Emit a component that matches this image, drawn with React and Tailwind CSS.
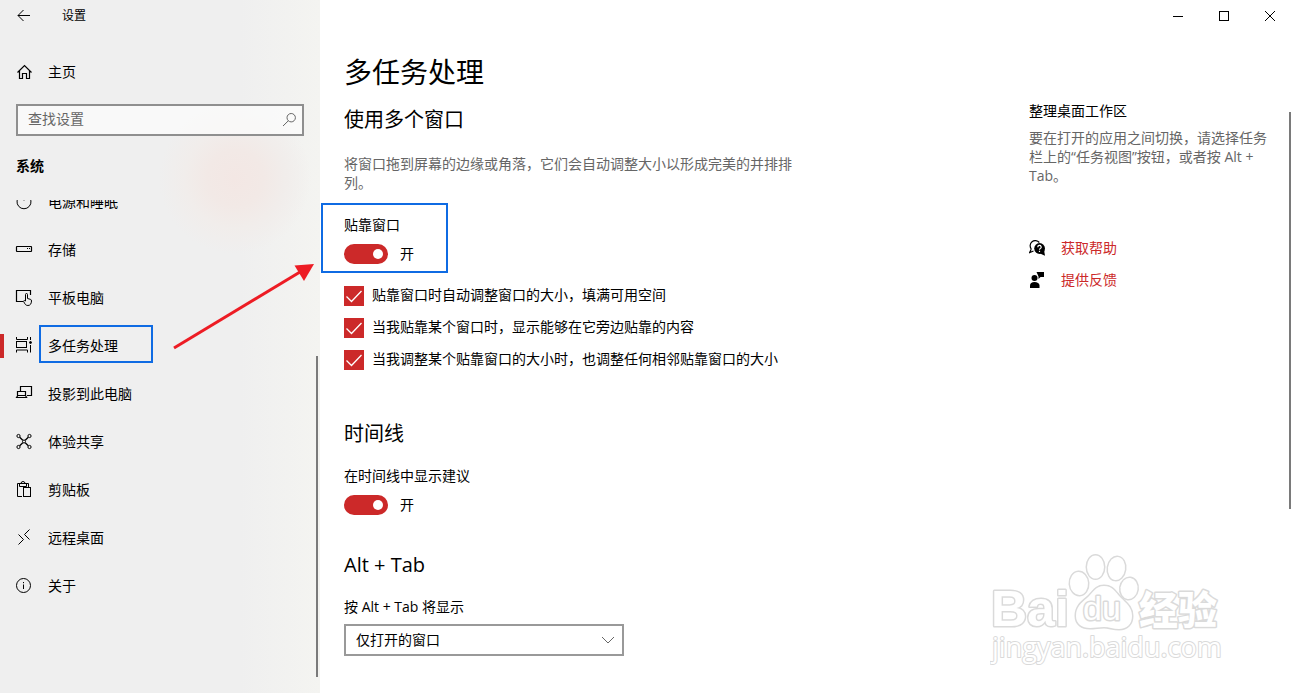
import { useState } from 'react';

const Icon = ({ children, className = '' }) => (
    <svg viewBox="0 0 16 16" className={`w-4 h-4 shrink-0 ${className}`} fill="none" stroke="currentColor" aria-hidden="true">
        {children}
    </svg>
);

const icons = {
    power: (
        <>
            <path d="M4 2A7 7 0 1 0 12 2" />
            <path d="M8 0V6.500" />
        </>
    ),
    storage: (
        <>
            <rect x="0.500" y="4.500" width="15" height="5" rx="0.500" strokeWidth="1.200" />
            <path d="M11 6.500h1M13 6.500h1" />
        </>
    ),
    tablet: (
        <>
            <path d="M7 11.500H0.500V0.500h14V5" strokeWidth="1.200" />
            <path d="M9.500 11V4.500a1 1 0 0 1 2 0V8.500l2.800 0.800a1.600 1.600 0 0 1 1.200 1.700c-0.100 2.700-1.200 4.500-3.600 4.500-2 0-2.900-1-4.400-4.300 0.300-0.900 1.300-0.900 2-0.200z" />
        </>
    ),
    multitask: (
        <>
            <path d="M0.500 -1v2.500h11v-2.500M0.500 14.500v-2.500h11v2.500M14.500 -1v3M14.500 7v7.500" />
            <rect x="0.500" y="3.500" width="10" height="6" />
            <circle cx="14.500" cy="4.500" r="1" fill="currentColor" />
        </>
    ),
    project: (
        <>
            <path d="M4.500 5V0.500h11v9h-4.500" strokeWidth="1.200" />
            <path d="M1.500 10V5.500h8V10M1.800 9.500L0.600 11.500h10L9.500 9.500z" strokeWidth="1.200" />
        </>
    ),
    share: (
        <>
            <circle cx="2.500" cy="2" r="1.600" />
            <circle cx="13.500" cy="2" r="1.600" />
            <circle cx="2.500" cy="13" r="1.600" />
            <circle cx="13.500" cy="13" r="1.600" />
            <circle cx="8" cy="7.500" r="1.500" />
            <path d="M3.700 3.200L6.800 6.300M12.300 3.200L9.200 6.300M3.700 11.800L6.800 8.700M12.300 11.800L9.200 8.700" strokeWidth="1.300" />
        </>
    ),
    clipboard: (
        <>
            <path d="M6 14.500H1.500v-13h11V6M3.500 1.500v3h7v-3" />
            <path d="M5 1.500a2 2 0 0 1 4 0" />
            <rect x="7.500" y="5.500" width="7" height="9" />
        </>
    ),
    remote: <path d="M2.500 4.500L7.500 9.500L2.500 14.500M13.500 -0.500L8.500 4.500L13.500 9.500" />,
    about: (
        <>
            <circle cx="7.500" cy="7.500" r="7" />
            <path d="M7.500 6.500v4.500M7.500 4v1.200" />
        </>
    ),
};

const navItems = [
    { id: 'power', label: '电源和睡眠' },
    { id: 'storage', label: '存储' },
    { id: 'tablet', label: '平板电脑' },
    { id: 'multitask', label: '多任务处理' },
    { id: 'project', label: '投影到此电脑' },
    { id: 'share', label: '体验共享' },
    { id: 'clipboard', label: '剪贴板' },
    { id: 'remote', label: '远程桌面' },
    { id: 'about', label: '关于' },
];

const snapOptions = [
    '贴靠窗口时自动调整窗口的大小，填满可用空间',
    '当我贴靠某个窗口时，显示能够在它旁边贴靠的内容',
    '当我调整某个贴靠窗口的大小时，也调整任何相邻贴靠窗口的大小',
];

const Toggle = ({ id, label }) => {
    const [on, setOn] = useState(true);

    return (
        <div>
            <label htmlFor={id} className="block">{label}</label>
            <div className="mt-[9px] flex items-center gap-3">
                <input id={id} type="checkbox" role="switch" checked={on} onChange={() => setOn(!on)}
                    className="appearance-none w-11 h-5 shrink-0 rounded-full border-2 border-[#666] px-[3px] flex items-center checked:justify-end checked:bg-[#cc2929] checked:border-[#cc2929] before:block before:w-[10px] before:h-[10px] before:rounded-full before:bg-[#666] checked:before:bg-white" />
                <span>{on ? '开' : '关'}</span>
            </div>
        </div>
    );
};

const Sidebar = () => (
    <aside className="relative w-80 shrink-0 flex flex-col bg-[radial-gradient(circle_at_235px_178px,#f3e7e4_0px,#f2e9e6_28px,#f1edeb_50px,transparent_76px),linear-gradient(to_right,#efefef_75%,#f4f4f1_100%)]">
        <div className="h-8 flex items-center">
            <button aria-label="返回" className="w-12 h-8 flex items-center justify-center">
                <Icon><path d="M14 7.500H2M7.500 2L2 7.500L7.500 13" /></Icon>
            </button>
            <span className="ml-[14px] text-xs">设置</span>
        </div>

        <a href="#home" className="mt-4 h-12 px-4 flex items-center gap-4">
            <Icon>
                <path d="M1.500 8.500L8.500 1.500L15.500 8.500M3.500 7v7.500h3v-5h4v5h3V7" strokeWidth="1.200" />
            </Icon>
            <span>主页</span>
        </a>

        <div className="relative mt-2 mx-4">
            <input type="text" aria-label="查找设置" placeholder="查找设置"
                className="block w-full h-8 border-2 border-[#8f8f8f] bg-white/60 pl-[10px] pr-8 pb-1 placeholder:text-[#666]" />
            <Icon className="absolute right-[6px] top-2 text-[#666]">
                <circle cx="9.200" cy="5.700" r="4.200" />
                <path d="M6.300 8.800L1 14" />
            </Icon>
        </div>

        <h2 className="mt-5 px-4 font-bold">系统</h2>

        <nav className="mt-6 overflow-hidden">
            <ul className="-mt-[22px]">
                {navItems.map((item) => (
                    <li key={item.id}>
                        <a href={`#${item.id}`} className="relative h-12 px-4 flex items-center gap-4">
                            {item.id === 'multitask' && <span className="absolute left-0 w-1 h-6 bg-[#cc2929]" />}
                            <Icon className="overflow-visible">{icons[item.id]}</Icon>
                            <span>{item.label}</span>
                            {item.id === 'multitask' && <span className="absolute left-[39px] top-[3px] w-[114px] h-[38px] border-2 border-[#0f6be3]" />}
                        </a>
                    </li>
                ))}
            </ul>
        </nav>

        <div className="absolute right-[2px] top-[356px] bottom-4 w-[2px] bg-[#7a7a7a]" />

        {/* Arrow from the menu item to the switch */}
        <svg viewBox="0 0 144 90" className="absolute left-[172px] top-[261px] w-[144px] h-[90px]" aria-hidden="true">
            <path d="M2 87L128 11" stroke="#ed1c24" strokeWidth="3" />
            <path d="M142 3L122.500 4.500L132 20z" fill="#ed1c24" />
        </svg>
    </aside>
);

const WindowControls = () => (
    <div className="h-8 flex justify-end">
        <button aria-label="最小化" className="w-[46px] flex items-center justify-center">
            <Icon><path d="M3 8.500h10" /></Icon>
        </button>
        <button aria-label="最大化" className="w-[46px] flex items-center justify-center">
            <Icon><rect x="3.500" y="3.500" width="9" height="9" /></Icon>
        </button>
        <button aria-label="关闭" className="w-[46px] flex items-center justify-center">
            <Icon><path d="M3 3L13 13M13 3L3 13" /></Icon>
        </button>
    </div>
);

const Help = () => (
    <section className="w-[264px] shrink-0 pt-[69px] pr-6">
        <h2>整理桌面工作区</h2>
        <p className="mt-[7px] leading-[19px] text-[#666]">
            要在打开的应用之间切换，请选择任务栏上的“任务视图”按钮，或者按 Alt + Tab。
        </p>
        <div className="mt-[53px] flex flex-col gap-3 leading-5 text-[#cc2929]">
            <a href="#help" className="flex items-center gap-4">
                <Icon className="text-black">
                    <path d="M2.300 9A5 5 0 1 1 10.300 2.500M2.300 9L0.700 12.500L4.500 11" strokeWidth="1.200" />
                    <circle cx="10.600" cy="8.500" r="5.400" fill="currentColor" stroke="none" />
                    <path d="M11 13.500L16 15.800L15 10z" fill="currentColor" stroke="none" />
                    <path d="M8.800 7.200a1.700 1.700 0 1 1 2.600 1.300c-0.700 0.400-0.900 0.600-0.900 1.300M10.500 10.700v1.200" stroke="white" strokeWidth="1.200" />
                </Icon>
                <span>获取帮助</span>
            </a>
            <a href="#feedback" className="flex items-center gap-4">
                <Icon className="text-black">
                    <g fill="currentColor" stroke="none">
                        <circle cx="5.500" cy="6" r="3" />
                        <path d="M1 16v-2.500c0-2.300 1.700-3.500 4.500-3.500s5 1.200 5 3.500V16z" />
                        <path d="M7.500 0H15v5h-3.500L9.500 7V4.500z" />
                    </g>
                </Icon>
                <span>提供反馈</span>
            </a>
        </div>
    </section>
);

const Watermark = () => (
    <svg viewBox="0 0 240 120" className="absolute right-[63px] bottom-[22px] w-[240px] h-[120px] pointer-events-none"
        fill="white" stroke="#dadada" strokeWidth="3" strokeLinejoin="round" style={{ paintOrder: 'stroke' }} aria-hidden="true">
        <text x="1" y="75" fontSize="50" fontWeight="700" fontFamily="Liberation Sans, sans-serif">Bai</text>
        <ellipse cx="89" cy="32.500" rx="9" ry="11.500" transform="rotate(-4 89 32.500)" />
        <ellipse cx="105.500" cy="16" rx="8.500" ry="11.500" />
        <ellipse cx="126.500" cy="17.500" rx="8.500" ry="11.500" transform="rotate(8 126.500 17.500)" />
        <ellipse cx="139" cy="37.500" rx="8.500" ry="10.500" transform="rotate(8 139 37.500)" />
        <path d="M114 35c-9 0-11 7-17 12-6 5-11 9-11 18 0 8 6 12 14 12 5 0 9-1 14-1s9 2 15 2c8 0 13-5 13-13 0-9-6-13-11-18-6-6-8-12-17-12z" />
        <text x="93" y="69" fontSize="34" fontFamily="Liberation Sans, sans-serif">du</text>
        <text x="149" y="73" fontSize="39" fontWeight="900" fontFamily="Noto Sans CJK SC, sans-serif">经验</text>
        <text x="2" y="106" fontSize="27" strokeWidth="2" fontFamily="Open Sans, sans-serif">jingyan.baidu.com</text>
    </svg>
);

const App = () => (
    <div className="relative min-h-screen flex bg-white text-black text-sm leading-5 font-['Open_Sans','Noto_Sans_CJK_SC',sans-serif]">
        <Sidebar />

        <div className="relative flex-1 min-w-0 flex flex-col">
            <WindowControls />
            <div className="flex-1 flex justify-between">
                <main className="pt-[22px] pl-6 pb-9">
                    <h1 className="text-[28px] leading-9">多任务处理</h1>
                    <h2 className="mt-4 text-xl leading-7">使用多个窗口</h2>
                    <p className="mt-5 max-w-[456px] leading-[19px] text-[#666]">
                        将窗口拖到屏幕的边缘或角落，它们会自动调整大小以形成完美的并排排列。
                    </p>

                    <div className="mt-[11px] -ml-[23px] w-[127px] border-2 border-[#0f6be3] pl-[21px] pt-[10px] pb-[7px]">
                        <Toggle id="snap" label="贴靠窗口" />
                    </div>

                    <ul className="mt-[13px] flex flex-col gap-3">
                        {snapOptions.map((text, i) => (
                            <li key={i}>
                                <label className="flex items-start gap-2">
                                    <span className="grid w-5 h-5">
                                        <input type="checkbox" defaultChecked
                                            className="peer col-start-1 row-start-1 appearance-none w-5 h-5 border-2 border-[#666] checked:border-[#cc2929] checked:bg-[#cc2929]" />
                                        <svg viewBox="0 0 20 20" className="col-start-1 row-start-1 w-5 h-5 pointer-events-none invisible peer-checked:visible" fill="none" stroke="white" strokeWidth="1.300">
                                            <path d="M2.500 10.500L7.500 15.500L17.500 5" />
                                        </svg>
                                    </span>
                                    <span className="leading-[18px]">{text}</span>
                                </label>
                            </li>
                        ))}
                    </ul>

                    <h2 className="mt-[50px] mb-[18px] text-xl leading-7">时间线</h2>
                    <Toggle id="timeline" label="在时间线中显示建议" />

                    <h2 className="mt-9 mb-[18px] text-xl leading-7">Alt + Tab</h2>
                    <label htmlFor="alt-tab" className="block">按 Alt + Tab 将显示</label>
                    <div className="relative mt-[7px] w-[280px]">
                        <select id="alt-tab" className="block w-full h-8 appearance-none border-2 border-[#999] bg-white pl-[10px] pr-8">
                            <option>仅打开的窗口</option>
                        </select>
                        <Icon className="absolute right-2 top-2 text-[#666] pointer-events-none">
                            <path d="M2 5L8 11L14 5" />
                        </Icon>
                    </div>
                </main>

                <Help />
            </div>

            <div className="absolute right-[2px] top-28 h-[397px] w-[2px] bg-[#7a7a7a]" />
            <Watermark />
        </div>
    </div>
);

export default App;
